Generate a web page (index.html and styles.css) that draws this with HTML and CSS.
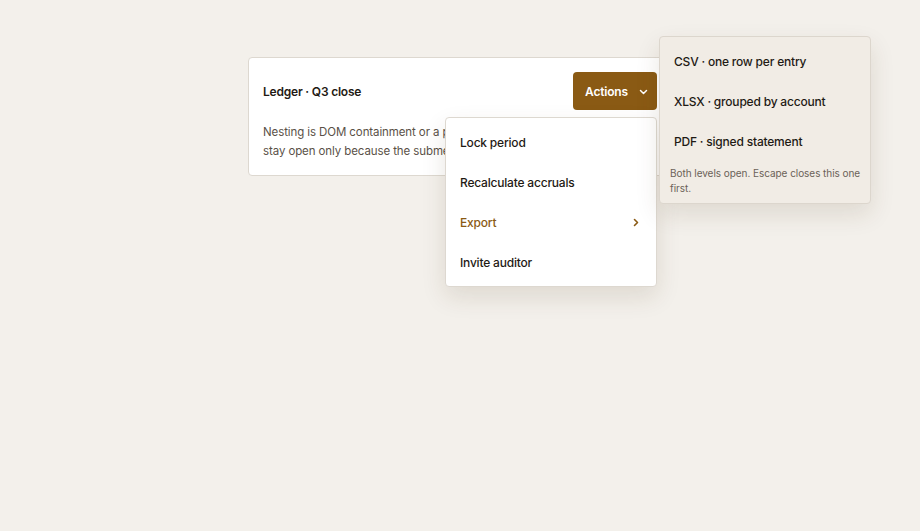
FILE: index.html
```html
<!DOCTYPE html>
<html lang="en">

<head>
    <meta charset="UTF-8">
    <meta name="viewport" content="width=device-width, initial-scale=1.0">
    <title>Ledger · Q3 close</title>
    <link rel="stylesheet" href="styles.css">
</head>

<body>
    <div class="page">
        <div class="card">
            <div class="card_head">
                <h2 class="title">Ledger · Q3 close</h2>
                <div class="dropdown">
                    <button class="actions">Actions
                        <svg class="caret" width="9" height="6" viewBox="0 0 9 6"><path d="M1.5 1.5 L4.5 4.5 L7.5 1.5" fill="none" stroke="#fff" stroke-width="1.5" stroke-linecap="round" stroke-linejoin="round"/></svg>
                    </button>
                    <ul class="menu">
                        <li>Lock period</li>
                        <li>Recalculate accruals</li>
                        <li class="open">Export
                            <svg class="arrow" width="6" height="9" viewBox="0 0 6 9"><path d="M1.5 1.5 L4.5 4.5 L1.5 7.5" fill="none" stroke="#8a5a14" stroke-width="1.6" stroke-linecap="round" stroke-linejoin="round"/></svg>
                            <div class="submenu">
                                <ul>
                                    <li>CSV · one row per entry</li>
                                    <li>XLSX · grouped by account</li>
                                    <li>PDF · signed statement</li>
                                </ul>
                                <p class="note">Both levels open. Escape closes this one first.</p>
                            </div>
                        </li>
                        <li>Invite auditor</li>
                    </ul>
                </div>
            </div>
            <p class="text">Nesting is DOM containment or a portal with a parent reference. Both<br>stay open only because the submenu is a child of its trigger.</p>
        </div>
    </div>
</body>

</html>
```

FILE: styles.css
```css
* {
    margin: 0;
    padding: 0;
    box-sizing: border-box;
    list-style: none;
}

html,
body {
    min-height: 100%;
}

body {
    background: #f3f0eb;
    font-family: Inter, "Noto Sans", sans-serif;
    color: #1f1a14;
}

.page {
    min-height: 100vh;
    display: flex;
    justify-content: center;
    align-items: flex-start;
    padding-top: 57px;
}

.card {
    width: 424px;
    background: #fff;
    border: 1px solid #ddd8d0;
    border-radius: 4px;
    padding: 14px;
}

.card_head {
    display: flex;
    justify-content: space-between;
    align-items: center;
}

.title {
    font-size: 12px;
    letter-spacing: -0.2px;
    font-weight: 600;
    color: #1f1a14;
}

.dropdown {
    position: relative;
}

.actions {
    height: 38px;
    width: 84px;
    border: 0;
    border-radius: 4px;
    background: #8a5a14;
    color: #fff;
    font-family: inherit;
    font-size: 12px;
    letter-spacing: -0.2px;
    font-weight: 600;
    display: flex;
    align-items: center;
    justify-content: center;
    gap: 11px;
    padding-left: 3px;
}

.caret {
    margin-top: 1px;
}

.text {
    margin-top: 13px;
    font-size: 11.5px;
    letter-spacing: -0.1px;
    line-height: 19px;
    color: #5a5147;
}

.menu {
    position: absolute;
    right: 0;
    top: 45px;
    width: 212px;
    background: #fff;
    border: 1px solid #ddd8d0;
    border-radius: 4px;
    padding: 4px 0;
    box-shadow: 0 10px 24px rgba(70, 50, 20, 0.12);
    z-index: 2;
}

.menu > li {
    height: 40px;
    display: flex;
    align-items: center;
    justify-content: space-between;
    padding: 0 17px 0 14px;
    font-size: 12px;
    letter-spacing: -0.2px;
    font-weight: 500;
    color: #1f1a14;
}

.menu > li.open {
    color: #8a5a14;
    position: relative;
}

.submenu {
    position: absolute;
    left: calc(100% + 3px);
    top: -166px;
    width: 212px;
    background: #f1ece5;
    border: 1px solid #dcd6cd;
    border-radius: 4px;
    padding: 4px 0 7px;
    box-shadow: 0 10px 24px rgba(70, 50, 20, 0.12);
    color: #1f1a14;
}

.submenu li {
    height: 40px;
    display: flex;
    align-items: center;
    padding: 0 14px;
}

.note {
    padding: 5px 6px 0 10px;
    font-size: 10px;
    letter-spacing: -0.05px;
    line-height: 15px;
    font-weight: 400;
    color: #6b6258;
}
```
